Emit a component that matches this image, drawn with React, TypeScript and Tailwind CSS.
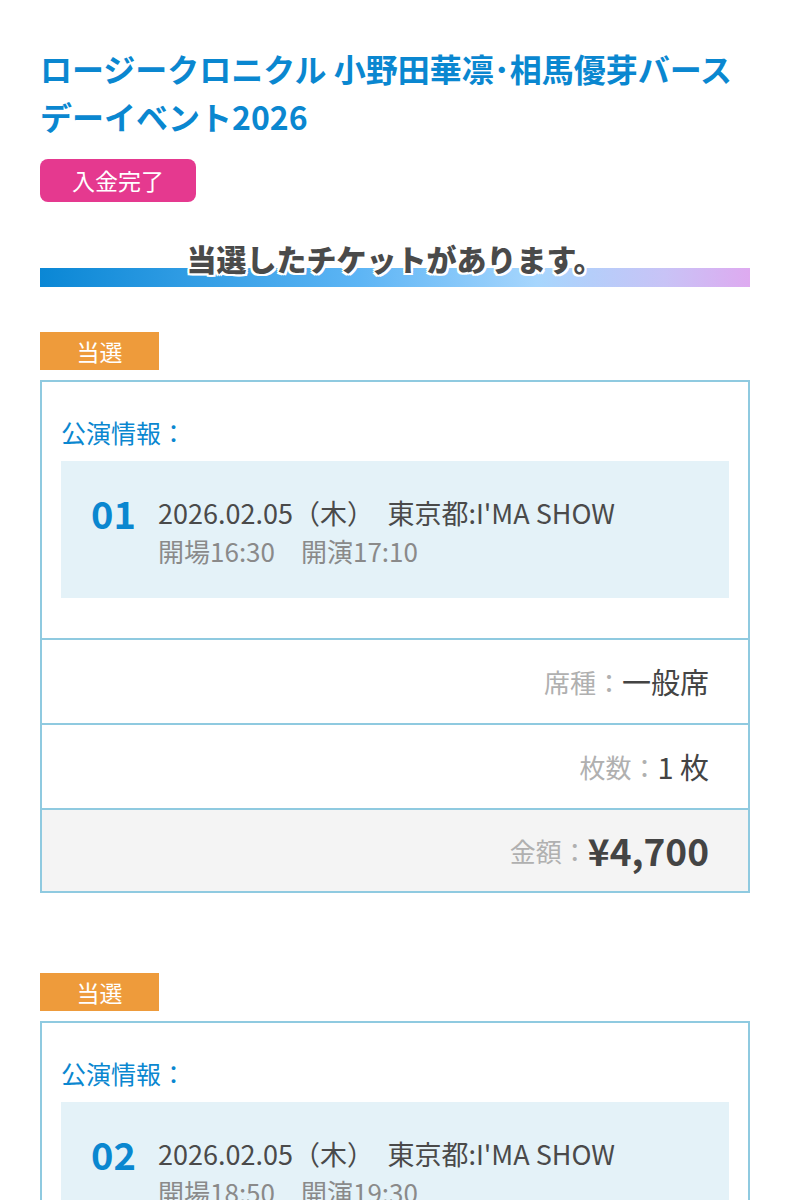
type Ticket = {
  no: string;
  open: string;
  start: string;
};

const tickets: Ticket[] = [
  { no: "01", open: "16:30", start: "17:10" },
  { no: "02", open: "18:50", start: "19:30" },
];

function TicketCard({ t }: { t: Ticket }) {
  return (
    <div>
      <div className="flex h-[38px] w-[119px] items-center justify-center bg-[#ee9b3b] text-[23px] leading-none text-white">
        当選
      </div>
      <div className="mt-[10px] border-2 border-[#8fcae0]">
        <div className="px-[19px] pb-[40px] pt-[32px]">
          <div className="text-[25px] leading-[36px] text-[#0a87d0]">公演情報：</div>
          <div className="mt-[11px] flex bg-[#e4f2f8] pb-[28px] pl-[30px] pt-[33px]">
            <div className="w-[67px] text-[38px] font-bold leading-[38px] text-[#0a87d0]">{t.no}</div>
            <div>
              <div className="text-[27px] leading-[38px] text-[#4a4a4a]">
                2026.02.05（木）　東京都:I'MA SHOW
              </div>
              <div className="text-[26px] leading-[38px] text-[#8a8a8a]">
                開場{t.open}　開演{t.start}
              </div>
            </div>
          </div>
        </div>
        <div className="flex h-[85px] items-center justify-end border-t-2 border-[#8fcae0] pr-[39px]">
          <span className="text-[26px] text-[#b0b0b0]">席種：</span>
          <span className="text-[29px] text-[#444]">一般席</span>
        </div>
        <div className="flex h-[85px] items-center justify-end border-t-2 border-[#8fcae0] pr-[39px]">
          <span className="text-[26px] text-[#b0b0b0]">枚数：</span>
          <span className="text-[29px] text-[#444]">1 枚</span>
        </div>
        <div className="flex h-[83px] items-center justify-end border-t-2 border-[#8fcae0] bg-[#f4f4f4] pr-[39px]">
          <span className="text-[26px] text-[#b0b0b0]">金額：</span>
          <span className="text-[37px] font-bold text-[#444]">¥4,700</span>
        </div>
      </div>
    </div>
  );
}

export default function App() {
  return (
    <div className="min-h-screen w-[787px] bg-white pl-[40px] pr-[37px] pt-[44px] font-['Noto_Sans_CJK_JP','Noto_Sans',sans-serif]">
      <h1 className="text-[32px] font-bold leading-[48px] text-[#0a87d0]">
        ロージークロニクル 小野田華凛･相馬優芽バースデーイベント2026
      </h1>
      <div className="mt-[19px] flex h-[43px] w-[156px] items-center justify-center rounded-lg bg-[#e5398f] text-[23px] leading-none text-white">
        入金完了
      </div>

      <div className="mt-[36px]">
        <div className="relative z-10 text-center text-[30px] font-black leading-[40px] text-[#4a4a4a] [text-shadow:2px_0_#fff,-2px_0_#fff,0_2px_#fff,0_-2px_#fff,2px_2px_#fff,-2px_-2px_#fff,2px_-2px_#fff,-2px_2px_#fff]">
          当選したチケットがあります。
        </div>
        <div className="-mt-[10px] h-[19px] bg-[linear-gradient(90deg,#0a87d5_0%,#5db5f5_45%,#a7d6fd_70%,#c8c3f6_88%,#deaaf0_100%)]" />
      </div>

      <div className="mt-[45px] flex flex-col gap-[80px] pb-[40px]">
        {tickets.map((t) => (
          <TicketCard key={t.no} t={t} />
        ))}
      </div>
    </div>
  );
}
